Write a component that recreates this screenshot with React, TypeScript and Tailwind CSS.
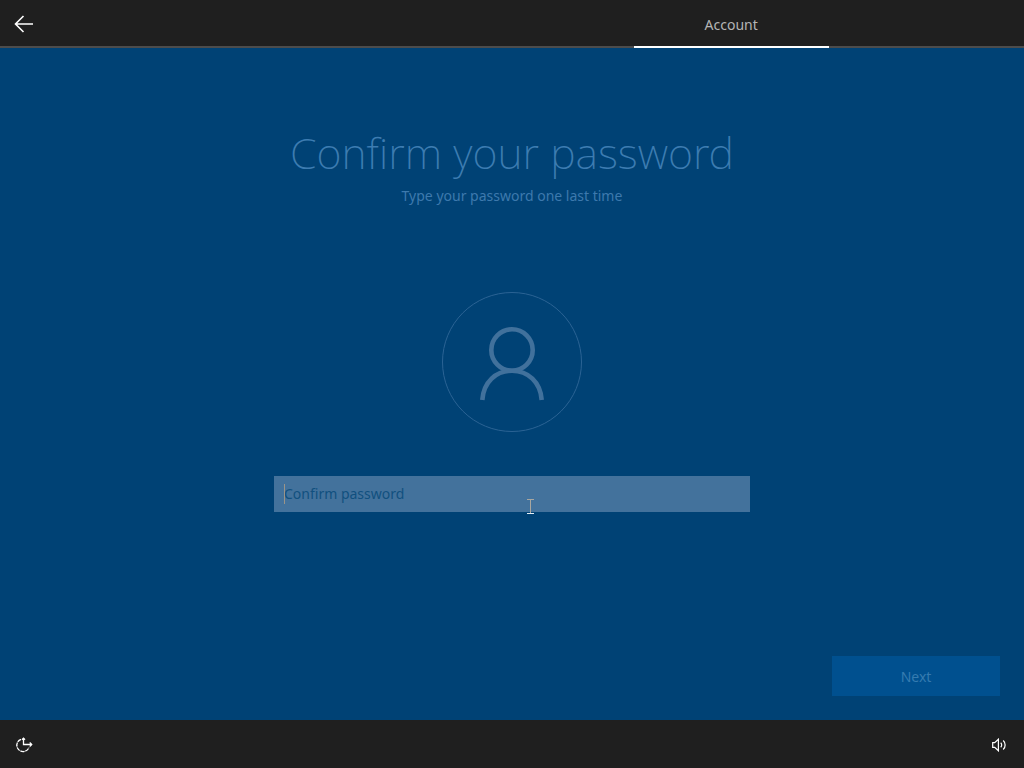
import { useState } from "react";

const steps = [
  { label: "", active: false },
  { label: "", active: false },
  { label: "", active: false },
  { label: "Account", active: true },
  { label: "", active: false },
];

function BackIcon() {
  return (
    <svg width="20" height="18" viewBox="0 0 20 18" fill="none" stroke="currentColor" strokeWidth="1.6">
      <path d="M1.500 9H19M9.500 1L1.500 9l8 8" />
    </svg>
  );
}

function EaseOfAccessIcon() {
  return (
    <svg width="18" height="16" viewBox="0 0 18 16" fill="none" stroke="currentColor" strokeWidth="1.300">
      <path d="M8.500 1V7.500H16.500" />
      <path d="M7 2.700L8.500 1.200l1.500 1.500M14.700 5.500l2 2-2 2" />
      <path d="M6 2.300A6.300 6.300 0 1 0 14 10.500" strokeDasharray="4.200 0.700" />
    </svg>
  );
}

function VolumeIcon() {
  return (
    <svg width="16" height="14" viewBox="0 0 16 14" fill="none" stroke="currentColor" strokeWidth="1.200">
      <path d="M0.700 4.700H2.700L6.400 1.200V12.800L2.700 9.300H0.700Z" />
      <path d="M8.700 4.700a3.200 3.200 0 0 1 0 4.600" />
      <path d="M11.200 2.500a6.200 6.200 0 0 1 0 9" />
    </svg>
  );
}

function PersonIcon() {
  return (
    <svg width="64" height="74" viewBox="0 0 64 74" fill="none" stroke="currentColor" strokeWidth="4.600">
      <circle cx="32" cy="23" r="20.700" />
      <path d="M2.300 73C3.500 55 16 43.700 32 43.700S60.500 55 61.700 73" />
    </svg>
  );
}

function TextCursor() {
  return (
    <svg width="9" height="17" viewBox="0 0 9 17" fill="none" className="pointer-events-none absolute left-[53%] top-[22px]">
      <path d="M4.500 1V16" stroke="#a9a7a0" />
      <path d="M1 1.500H8" stroke="#a9a7a0" />
      <path d="M1 15.500H8" stroke="#e3edf5" />
    </svg>
  );
}

export default function App() {
  const [password, setPassword] = useState("");

  return (
    <div className="flex min-h-screen flex-col bg-[#004275] font-['Noto_Sans','Open_Sans',sans-serif] text-[#41719c]">
      <header className="flex h-12 bg-[#1f1f1f] text-white">
        <button
          type="button"
          aria-label="Back"
          className="flex w-12 items-center justify-center border-b-2 border-[#4c4c4c] pt-0.5"
        >
          <BackIcon />
        </button>
        <ol className="grid flex-1 grid-cols-5">
          {steps.map((step, i) => (
            <li
              key={i}
              className={`flex items-center justify-center border-b-2 pt-1 text-sm text-[#b4b4b4] ${
                step.active ? "border-white" : "border-[#4c4c4c]"
              }`}
            >
              {step.label}
            </li>
          ))}
        </ol>
      </header>

      <main className="flex flex-1 flex-col px-6 pb-6 pt-[72px]">
        <form className="flex flex-1 flex-col" onSubmit={(e) => e.preventDefault()}>
          <div className="flex flex-col items-center">
            <h1 className="text-[43px] font-extralight leading-[66px] text-[#3d7cb1]">Confirm your password</h1>
            <p className="text-sm text-[#3d79ad]">Type your password one last time</p>

            <div className="mt-[86px] flex size-[140px] items-center justify-center rounded-full border border-[#2b6394] pt-1">
              <PersonIcon />
            </div>

            <div className="relative mt-11 w-full max-w-[476px]">
              <input
                type="password"
                aria-label="Confirm password"
                placeholder="Confirm password"
                value={password}
                onChange={(e) => setPassword(e.target.value)}
                className="block h-9 w-full bg-[#43729c] px-[10px] pb-0.5 text-sm text-[#0b3f6c] outline-none placeholder:text-[#11507f]"
              />
              <span className="pointer-events-none absolute left-[10px] top-2 h-5 w-px bg-[#9b9488]" />
              <TextCursor />
            </div>
          </div>

          <button
            type="submit"
            className="mt-auto h-10 w-[168px] self-end bg-[#00508f] pt-0.5 text-sm text-[#357bb0]"
          >
            Next
          </button>
        </form>
      </main>

      <footer className="flex h-12 items-center justify-between bg-[#1f1f1f] text-white">
        <button type="button" aria-label="Ease of access" className="flex size-12 items-center justify-center pt-0.5">
          <EaseOfAccessIcon />
        </button>
        <button type="button" aria-label="Volume" className="flex size-12 items-center justify-center pt-0.5">
          <VolumeIcon />
        </button>
      </footer>
    </div>
  );
}
